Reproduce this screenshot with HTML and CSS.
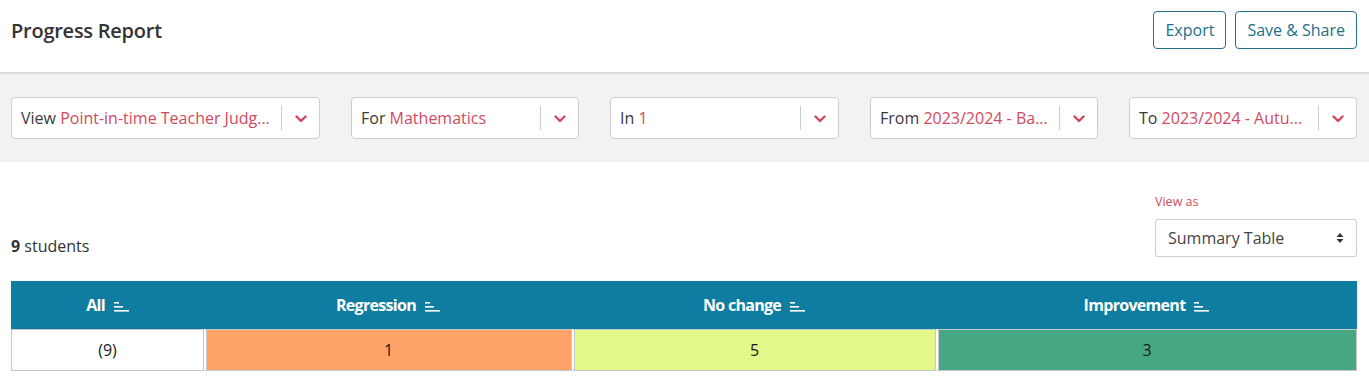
FILE: index.html
```html
<!DOCTYPE html>
<html lang="en">
<head>
<meta charset="utf-8">
<title>Progress Report</title>
<link rel="stylesheet" href="styles.css">
</head>
<body>
<header class="topbar">
  <h1 class="title">Progress Report</h1>
  <div class="actions">
    <button class="btn">Export</button>
    <button class="btn">Save &amp; Share</button>
  </div>
</header>

<section class="filters">
  <div class="dd"><span class="dd-text"><span class="lbl">View </span><span class="val">Point-in-time Teacher Judg...</span></span><span class="dd-sep"></span><span class="dd-arrow"><svg width="12" height="8" viewBox="0 0 12 8"><path d="M1.5 1.5 L6 6 L10.5 1.5" fill="none" stroke="#d4475f" stroke-width="2.4" stroke-linecap="round" stroke-linejoin="round"/></svg></span></div>
  <div class="dd"><span class="dd-text"><span class="lbl">For </span><span class="val">Mathematics</span></span><span class="dd-sep"></span><span class="dd-arrow"><svg width="12" height="8" viewBox="0 0 12 8"><path d="M1.5 1.5 L6 6 L10.5 1.5" fill="none" stroke="#d4475f" stroke-width="2.4" stroke-linecap="round" stroke-linejoin="round"/></svg></span></div>
  <div class="dd"><span class="dd-text"><span class="lbl">In </span><span class="val">1</span></span><span class="dd-sep"></span><span class="dd-arrow"><svg width="12" height="8" viewBox="0 0 12 8"><path d="M1.5 1.5 L6 6 L10.5 1.5" fill="none" stroke="#d4475f" stroke-width="2.4" stroke-linecap="round" stroke-linejoin="round"/></svg></span></div>
  <div class="dd"><span class="dd-text"><span class="lbl">From </span><span class="val">2023/2024 - Ba...</span></span><span class="dd-sep"></span><span class="dd-arrow"><svg width="12" height="8" viewBox="0 0 12 8"><path d="M1.5 1.5 L6 6 L10.5 1.5" fill="none" stroke="#d4475f" stroke-width="2.4" stroke-linecap="round" stroke-linejoin="round"/></svg></span></div>
  <div class="dd"><span class="dd-text"><span class="lbl">To </span><span class="val">2023/2024 - Autu...</span></span><span class="dd-sep"></span><span class="dd-arrow"><svg width="12" height="8" viewBox="0 0 12 8"><path d="M1.5 1.5 L6 6 L10.5 1.5" fill="none" stroke="#d4475f" stroke-width="2.4" stroke-linecap="round" stroke-linejoin="round"/></svg></span></div>
</section>

<section class="summary-head">
  <div class="count"><b>9</b> students</div>
  <div class="viewas">
    <div class="viewas-label">View as</div>
    <div class="select"><span>Summary Table</span><svg width="8" height="12" viewBox="0 0 8 12"><path d="M0.5 5 L4 1 L7.5 5 Z M0.5 7 L4 11 L7.5 7 Z" fill="#333"/></svg></div>
  </div>
</section>

<div class="table">
  <div class="th">All <svg class="sort" width="15" height="10" viewBox="0 0 15 10"><rect x="0" y="0" width="5" height="1.6" fill="#fff"/><rect x="0" y="4" width="9" height="1.6" fill="#fff"/><rect x="0" y="8" width="15" height="1.6" fill="#fff"/></svg></div>
  <div class="th">Regression <svg class="sort" width="15" height="10" viewBox="0 0 15 10"><rect x="0" y="0" width="5" height="1.6" fill="#fff"/><rect x="0" y="4" width="9" height="1.6" fill="#fff"/><rect x="0" y="8" width="15" height="1.6" fill="#fff"/></svg></div>
  <div class="th">No change <svg class="sort" width="15" height="10" viewBox="0 0 15 10"><rect x="0" y="0" width="5" height="1.6" fill="#fff"/><rect x="0" y="4" width="9" height="1.6" fill="#fff"/><rect x="0" y="8" width="15" height="1.6" fill="#fff"/></svg></div>
  <div class="th">Improvement <svg class="sort" width="15" height="10" viewBox="0 0 15 10"><rect x="0" y="0" width="5" height="1.6" fill="#fff"/><rect x="0" y="4" width="9" height="1.6" fill="#fff"/><rect x="0" y="8" width="15" height="1.6" fill="#fff"/></svg></div>
  <div class="td all">(9)</div>
  <div class="td reg">1</div>
  <div class="td noc">5</div>
  <div class="td imp">3</div>
</div>
</body>
</html>
```
FILE: styles.css
```css
* { box-sizing: border-box; }
html, body { margin: 0; padding: 0; background: #fff; }
body {
  font-family: "Open Sans", "Liberation Sans", sans-serif;
  color: #333;
  width: 1369px;
}
.topbar {
  height: 74px;
  display: flex;
  align-items: center;
  justify-content: space-between;
  padding: 0 12px 0 11px;
  border-bottom: 2px solid #dcdcdc;
}
.title {
  margin: 0;
  font-size: 20px;
  font-weight: 600;
  color: #333;
  letter-spacing: -0.25px;
  position: relative;
  top: -6px;
}
.actions { display: flex; gap: 9px; position: relative; top: -6px; }
.btn {
  font-family: inherit;
  font-size: 16px;
  color: #22708a;
  background: #fff;
  border: 1px solid #22708a;
  border-radius: 4px;
  height: 38px;
  padding: 0 11px;
  cursor: pointer;
}
.filters {
  background: #f3f2f3;
  height: 88px;
  display: grid;
  grid-template-columns: 309fr 228fr 229fr 228fr 228fr;
  column-gap: 31px;
  padding: 0 12px 0 11px;
  align-items: center;
}
.dd {
  height: 42px;
  background: #fff;
  border: 1px solid #cfcdcf;
  border-radius: 4px;
  display: flex;
  align-items: center;
  padding-left: 9px;
  min-width: 0;
}
.dd-text {
  flex: 1;
  min-width: 0;
  white-space: nowrap;
  font-size: 16px;
  color: #444;
  padding-right: 6px;
}
.lbl { color: #3a3a3a; }
.val { color: #d24a60; }
.dd-sep { width: 1px; height: 24px; background: #ccc; }
.dd-arrow { width: 37px; display: flex; justify-content: center; align-items: center; padding-top: 2px; }
.summary-head {
  display: flex;
  justify-content: space-between;
  align-items: flex-end;
  padding: 31px 12px 24px 11px;
}
.count { font-size: 16px; color: #333; }
.count b { font-weight: 700; }
.viewas { width: 202px; }
.viewas-label { font-size: 12.5px; color: #d24a60; margin-bottom: 9px; }
.select {
  height: 38px;
  border: 1px solid #cfcdcf;
  border-radius: 3px;
  display: flex;
  align-items: center;
  justify-content: space-between;
  padding: 0 12px 0 12px;
  font-size: 16px;
  color: #444;
}
.table {
  margin: 0 12px 0 11px;
  display: grid;
  grid-template-columns: 193fr 368fr 364fr 421fr;
}
.th {
  background: #0e7da1;
  color: #fff;
  height: 48px;
  display: flex;
  align-items: center;
  justify-content: center;
  font-size: 16px;
  font-weight: 700;
  letter-spacing: -0.7px;
  gap: 9px;
}
.sort { position: relative; top: 2px; }
.td {
  height: 42px;
  display: flex;
  align-items: center;
  justify-content: center;
  font-size: 16px;
  color: #1a1a1a;
  border: 1px solid #c6c6c6;
  box-shadow: inset 1px 0 0 #c6c6c6;
}
.td.all { background: #fff; box-shadow: none; }
.td.reg { background: #fea468; border-left: 2px solid #fff; }
.td.noc { background: #e2f98a; border-left: 2px solid #fff; }
.td.imp { background: #46a883; border-left: 2px solid #fff; }
```
